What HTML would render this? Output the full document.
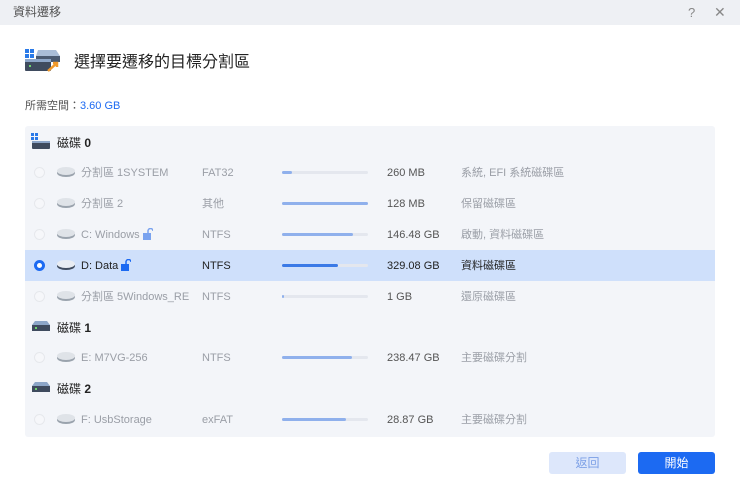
<!DOCTYPE html>
<html><head><meta charset="utf-8"><style>
*{margin:0;padding:0;box-sizing:border-box}
body{width:740px;height:493px;background:#fff;font-family:"Liberation Sans","Noto Sans CJK TC",sans-serif;position:relative;overflow:hidden;color:#333}
.tb{position:absolute;left:0;top:0;width:740px;height:25px;background:#eef0f4;font-size:12px;color:#555}
.abs{position:absolute}
.panel{position:absolute;left:25px;top:126px;width:690px;height:311px;background:#f3f5f9;border-radius:3px}
.row{position:absolute;left:0;width:690px;height:31px;font-size:11px;color:#9a9ea6}
.row span{position:absolute;top:1px;height:31px;line-height:31px;white-space:nowrap}
.sel{background:#cfe0fb;color:#222}
.radio{position:absolute;left:9px;top:10px;width:11px;height:11px;border-radius:50%;border:1px solid #e6e8ec;background:#f6f7fa}
.sel .radio{border:3px solid #1c6af2;background:#fff}
.bar{position:absolute;left:257px;top:14px;width:86px;height:3px;background:#e4e7ee;border-radius:2px}
.bar i{display:block;height:3px;background:#8fb0ec;border-radius:2px}
.sel .bar i{background:#3b7ae6}
.hd{position:absolute;left:0;width:690px;height:30px;font-size:12px;color:#222}
.hd b{position:absolute;left:32px;top:1px;line-height:30px;font-weight:normal}
.sz{color:#555}
.sel .sz{color:#222}
.lk{vertical-align:-2px;margin-left:3px}
</style></head><body>
<div class="tb"><span class="abs" style="left:13px;top:0;line-height:25px">資料遷移</span>
<span class="abs" style="left:688px;top:5px;font-size:13px;color:#888">?</span>
<span class="abs" style="left:714px;top:4px;font-size:14px;color:#888">✕</span></div>
<svg class="abs" style="left:24px;top:47px" width="36" height="28" viewBox="0 0 36 28">
<rect x="1" y="2" width="4" height="4" fill="#2a7ae8"/><rect x="6" y="2" width="4" height="4" fill="#2a7ae8"/><rect x="1" y="7" width="4" height="4" fill="#2a7ae8"/><rect x="6" y="7" width="4" height="4" fill="#2a7ae8"/>
<path d="M14 3 L32 3 L36 9 L12 9 Z" fill="#a9bdd8"/><rect x="12" y="9" width="24" height="6" fill="#4a5a72"/>
<rect x="1" y="13" width="26" height="11" rx="1" fill="#3f4b5e"/><rect x="1" y="12" width="26" height="3" fill="#8da6c8"/><rect x="5" y="18" width="2" height="2" fill="#6fd46f"/>
<path d="M24 24 L33 16 M29 16 L33 16 L33 20" stroke="#f29a2b" stroke-width="2.5" fill="none"/></svg>
<div class="abs" style="left:74px;top:51px;font-size:16px;line-height:24px;color:#222">選擇要遷移的目標分割區</div>
<div class="abs" style="left:25px;top:97px;font-size:11px;line-height:18px;color:#555">所需空間：<span style="color:#1c6af2">3.60 GB</span></div>
<div class="panel">
<div class="hd" style="top:1px"><svg class="abs" style="left:6px;top:6px" width="20" height="17"><rect x="0" y="0" width="3" height="3" fill="#2a7ae8"/><rect x="4" y="0" width="3" height="3" fill="#2a7ae8"/><rect x="0" y="4" width="3" height="3" fill="#2a7ae8"/><rect x="4" y="4" width="3" height="3" fill="#2a7ae8"/><rect x="1" y="8" width="18" height="8" rx="1" fill="#3f4b5e"/><rect x="1" y="8" width="18" height="2" fill="#8da6c8"/></svg><b>磁碟 <strong>0</strong></b></div>
<div class="row" style="top:31px"><div class="radio"></div><svg class="abs" style="left:31px;top:9px" width="20" height="12"><ellipse cx="10" cy="7" rx="9" ry="4" fill="#9aa3ad"/><ellipse cx="10" cy="5" rx="9" ry="4" fill="#dfe3e8"/></svg><span style="left:56px">分割區 1SYSTEM</span><span style="left:177px">FAT32</span><div class="bar"><i style="width:10px"></i></div><span class="sz" style="left:362px">260 MB</span><span style="left:436px">系統, EFI 系統磁碟區</span></div>
<div class="row" style="top:62px"><div class="radio"></div><svg class="abs" style="left:31px;top:9px" width="20" height="12"><ellipse cx="10" cy="7" rx="9" ry="4" fill="#9aa3ad"/><ellipse cx="10" cy="5" rx="9" ry="4" fill="#dfe3e8"/></svg><span style="left:56px">分割區 2</span><span style="left:177px">其他</span><div class="bar"><i style="width:86px"></i></div><span class="sz" style="left:362px">128 MB</span><span style="left:436px">保留磁碟區</span></div>
<div class="row" style="top:93px"><div class="radio"></div><svg class="abs" style="left:31px;top:9px" width="20" height="12"><ellipse cx="10" cy="7" rx="9" ry="4" fill="#9aa3ad"/><ellipse cx="10" cy="5" rx="9" ry="4" fill="#dfe3e8"/></svg><span style="left:56px">C: Windows<svg class="lk" width="10" height="12"><path d="M5 5 V3 A2.5 2.5 0 0 1 10 3" stroke="#7aa3ef" stroke-width="1.5" fill="none"/><rect x="0" y="5" width="8" height="7" fill="#7aa3ef"/></svg></span><span style="left:177px">NTFS</span><div class="bar"><i style="width:71px"></i></div><span class="sz" style="left:362px">146.48 GB</span><span style="left:436px">啟動, 資料磁碟區</span></div>
<div class="row sel" style="top:124px"><div class="radio"></div><svg class="abs" style="left:31px;top:9px" width="20" height="12"><ellipse cx="10" cy="7" rx="9" ry="4" fill="#3f4b5e"/><ellipse cx="10" cy="5" rx="9" ry="4" fill="#e8ecf2"/></svg><span style="left:56px">D: Data<svg class="lk" width="10" height="12"><path d="M5 5 V3 A2.5 2.5 0 0 1 10 3" stroke="#1c6af2" stroke-width="1.5" fill="none"/><rect x="0" y="5" width="8" height="7" fill="#1c6af2"/></svg></span><span style="left:177px">NTFS</span><div class="bar"><i style="width:56px"></i></div><span class="sz" style="left:362px">329.08 GB</span><span style="left:436px">資料磁碟區</span></div>
<div class="row" style="top:155px"><div class="radio"></div><svg class="abs" style="left:31px;top:9px" width="20" height="12"><ellipse cx="10" cy="7" rx="9" ry="4" fill="#9aa3ad"/><ellipse cx="10" cy="5" rx="9" ry="4" fill="#dfe3e8"/></svg><span style="left:56px">分割區 5Windows_RE</span><span style="left:177px">NTFS</span><div class="bar"><i style="width:2px"></i></div><span class="sz" style="left:362px">1 GB</span><span style="left:436px">還原磁碟區</span></div>
<div class="hd" style="top:186px"><svg class="abs" style="left:7px;top:9px" width="20" height="12"><path d="M3 0 H15 L18 4 H0 Z" fill="#8da6c8"/><rect x="0" y="4" width="18" height="6" fill="#3f4b5e"/><rect x="3" y="6" width="2" height="2" fill="#6fd46f"/></svg><b>磁碟 <strong>1</strong></b></div>
<div class="row" style="top:216px"><div class="radio"></div><svg class="abs" style="left:31px;top:9px" width="20" height="12"><ellipse cx="10" cy="7" rx="9" ry="4" fill="#9aa3ad"/><ellipse cx="10" cy="5" rx="9" ry="4" fill="#dfe3e8"/></svg><span style="left:56px">E: M7VG-256</span><span style="left:177px">NTFS</span><div class="bar"><i style="width:70px"></i></div><span class="sz" style="left:362px">238.47 GB</span><span style="left:436px">主要磁碟分割</span></div>
<div class="hd" style="top:247px"><svg class="abs" style="left:7px;top:9px" width="20" height="12"><path d="M3 0 H15 L18 4 H0 Z" fill="#8da6c8"/><rect x="0" y="4" width="18" height="6" fill="#3f4b5e"/><rect x="3" y="6" width="2" height="2" fill="#6fd46f"/></svg><b>磁碟 <strong>2</strong></b></div>
<div class="row" style="top:278px"><div class="radio"></div><svg class="abs" style="left:31px;top:9px" width="20" height="12"><ellipse cx="10" cy="7" rx="9" ry="4" fill="#9aa3ad"/><ellipse cx="10" cy="5" rx="9" ry="4" fill="#dfe3e8"/></svg><span style="left:56px">F: UsbStorage</span><span style="left:177px">exFAT</span><div class="bar"><i style="width:64px"></i></div><span class="sz" style="left:362px">28.87 GB</span><span style="left:436px">主要磁碟分割</span></div>
</div>
<div class="abs" style="left:549px;top:452px;width:77px;height:22px;background:#dde7fb;border-radius:3px;color:#7b9fe6;font-size:12px;text-align:center;line-height:22px">返回</div>
<div class="abs" style="left:638px;top:452px;width:77px;height:22px;background:#1c6af2;border-radius:3px;color:#fff;font-size:12px;text-align:center;line-height:22px">開始</div>
</body></html>
